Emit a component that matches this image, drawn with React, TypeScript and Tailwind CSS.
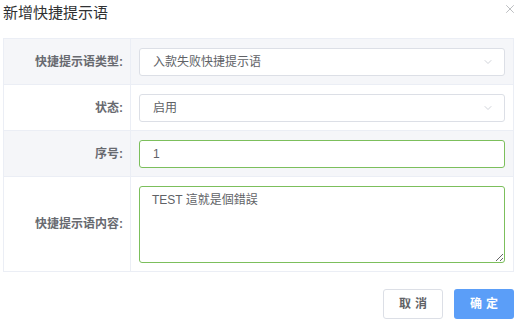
import React from 'react';
import { X, ChevronDown } from 'lucide-react';

const font = { fontFamily: '"Liberation Sans", "Noto Sans CJK SC", sans-serif' };

interface FormRowProps {
  label: string;
  striped?: boolean;
  tall?: boolean;
  children: React.ReactNode;
}

const FormRow: React.FC<FormRowProps> = ({ label, striped = false, tall = false, children }) => (
  <div
    className={`flex border-b border-[#ebeef5] last:border-b-0 ${tall ? 'h-[94px]' : 'h-[46px]'} ${
      striped ? 'bg-[#f5f6f9]' : 'bg-white'
    }`}
  >
    <div className="w-[127px] flex-shrink-0 flex items-center justify-end pr-[7px] border-r border-[#ebeef5] text-[12px] font-semibold text-[#686a70]">
      {label}
    </div>
    <div className="flex-1 flex items-center px-2">{children}</div>
  </div>
);

// fake select box
const SelectBox: React.FC<{ value: string }> = ({ value }) => (
  <div className="w-full h-[28px] flex items-center justify-between pl-[13px] pr-[10px] bg-white border border-[#dcdfe6] rounded-[3px] text-[12px] text-[#606266]">
    <span>{value}</span>
    <ChevronDown className="w-[12px] h-[12px] text-[#c0c4cc]" strokeWidth={1.5} />
  </div>
);

export default function App() {
  return (
    <div className="w-[518px] h-[320px] bg-white relative pl-[3px] pr-[4px]" style={font}>
      {/* Header */}
      <div className="h-[38px] pt-[3px]">
        <h3 className="text-[15px] leading-[20px] text-[#303133]">新增快捷提示语</h3>
      </div>
      <button className="absolute top-[2px] right-[1px] text-[#a0a3a8]">
        <X className="w-[14px] h-[14px]" strokeWidth={1.2} />
      </button>

      {/* Form table */}
      <div className="border border-[#ebeef5]">
        <FormRow label="快捷提示语类型:" striped>
          <SelectBox value="入款失败快捷提示语" />
        </FormRow>
        <FormRow label="状态:">
          <SelectBox value="启用" />
        </FormRow>
        <FormRow label="序号:" striped>
          <input
            defaultValue="1"
            className="w-full h-[28px] pl-[13px] bg-white border border-[#7cbf5c] rounded-[3px] text-[12px] text-[#606266] outline-none"
            style={font}
          />
        </FormRow>
        <FormRow label="快捷提示语内容:" tall>
          <textarea
            defaultValue="TEST 這就是個錯誤"
            className="w-full h-[77px] px-[12px] py-[4px] bg-white border border-[#7cbf5c] rounded-[3px] text-[12px] leading-[18px] text-[#606266] outline-none resize-y"
            style={font}
          />
        </FormRow>
      </div>

      {/* Footer */}
      <div className="flex justify-end gap-[11px] pt-[17px] pr-[-1px]">
        <button className="w-[60px] h-[30px] border border-[#dcdfe6] rounded-[3px] bg-white text-[12px] font-semibold text-[#606266] tracking-[4px] pl-[4px]">
          取消
        </button>
        <button className="w-[60px] h-[30px] rounded-[3px] bg-[#5b9ef8] text-[12px] font-semibold text-white tracking-[4px] pl-[4px]">
          确定
        </button>
      </div>
    </div>
  );
}
